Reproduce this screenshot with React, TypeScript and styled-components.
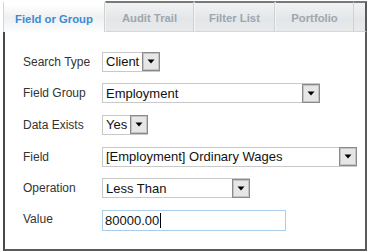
import styled, { createGlobalStyle } from 'styled-components';

const GlobalStyle = createGlobalStyle`
  body {
    margin: 0;
    background: #fff;
    font-family: "Liberation Sans", Arial, sans-serif;
  }
`;

const Window = styled.div`
  width: 364px;
  margin: 1px 0 0 3px;
`;

const TabBar = styled.div`
  display: flex;
  height: 31px;
`;

const Tab = styled.div<{ active?: boolean; w: number }>`
  width: ${(p) => p.w}px;
  box-sizing: border-box;
  display: flex;
  align-items: center;
  justify-content: center;
  font-size: 11.3px;
  font-weight: bold;
  color: ${(p) => (p.active ? '#3b8bd2' : '#9ea6ae')};
  padding-top: ${(p) => (p.active ? '3px' : '1px')};
  background: ${(p) =>
    p.active
      ? 'linear-gradient(#ffffff 0px, #ffffff 2px, #eef0f2 14px, #ffffff 31px)'
      : 'linear-gradient(#f0f2f3, #e3e6e8 60%, #e8eaec)'};
  border-top: ${(p) => (p.active ? '2px solid #fff' : '2px solid #7a7a7a')};
  border-left: 1px solid ${(p) => (p.active ? '#d6d6d6' : '#f4f4f4')};
  border-right: 1px solid ${(p) => (p.active ? '#d0d0d0' : '#cfd2d4')};
  border-bottom: ${(p) => (p.active ? 'none' : '1px solid #d4d6d8')};
`;

const TabFill = styled.div`
  flex: 1;
  background: linear-gradient(#f0f2f3, #e3e6e8 60%, #e8eaec);
  border-top: 2px solid #7a7a7a;
  border-right: 2px solid #5a5a5a;
  border-bottom: 1px solid #d4d6d8;
`;

const Body = styled.div`
  height: 219px;
  box-sizing: border-box;
  border-left: 2px solid #4a4a4a;
  border-right: 2px solid #5a5a5a;
  border-bottom: 2px solid #5a5a5a;
  padding: 14px 0 0 18px;
  display: grid;
  grid-template-columns: 79px auto;
  grid-auto-rows: 31.6px;
  align-items: center;
  align-content: start;
`;

const Label = styled.div<{ lift?: number }>`
  font-size: 12px;
  color: #333;
  margin-top: ${(p) => -(p.lift || 0)}px;
`;

const Select = styled.div<{ w: number }>`
  width: ${(p) => p.w}px;
  height: 20px;
  box-sizing: border-box;
  border: 1px solid #c9c9c9;
  display: flex;
  align-items: center;
  justify-content: space-between;
  font-size: 13px;
  color: #111;
  padding-left: 3px;
  background: #fff;
`;

const DropButton = styled.div`
  width: 18px;
  height: 19px;
  margin-right: -1px;
  box-sizing: border-box;
  border: 1px solid #8a8a8a;
  box-shadow: inset 0 0 0 1px #c4c4c4;
  background: #e6e6e6;
  display: flex;
  align-items: center;
  justify-content: center;
`;

const Input = styled.div<{ w: number }>`
  width: ${(p) => p.w}px;
  height: 21px;
  box-sizing: border-box;
  border: 1px solid #a9cdea;
  display: flex;
  align-items: center;
  font-size: 13px;
  color: #111;
  padding-left: 2px;
  margin-top: 2px;
`;

const Caret = styled.span`
  width: 1px;
  height: 15px;
  background: #000;
  margin-left: 1px;
`;

function Arrow() {
  return (
    <svg width="8" height="5" viewBox="0 0 8 5">
      <path d="M0.5 0.5H7.5L4 4.5Z" fill="#000" />
    </svg>
  );
}

function Dropdown({ value, w }: { value: string; w: number }) {
  return (
    <Select w={w}>
      <span>{value}</span>
      <DropButton>
        <Arrow />
      </DropButton>
    </Select>
  );
}

export default function App() {
  return (
    <>
      <GlobalStyle />
      <Window>
        <TabBar>
          <Tab active w={102}>Field or Group</Tab>
          <Tab w={89}>Audit Trail</Tab>
          <Tab w={81}>Filter List</Tab>
          <Tab w={79}>Portfolio</Tab>
          <TabFill />
        </TabBar>
        <Body>
          <Label>Search Type</Label>
          <Dropdown value="Client" w={58} />
          <Label>Field Group</Label>
          <Dropdown value="Employment" w={218} />
          <Label>Data Exists</Label>
          <Dropdown value="Yes" w={46} />
          <Label>Field</Label>
          <Dropdown value="[Employment] Ordinary Wages" w={255} />
          <Label>Operation</Label>
          <Dropdown value="Less Than" w={148} />
          <Label lift={2}>Value</Label>
          <Input w={184}>
            80000.00
            <Caret />
          </Input>
        </Body>
      </Window>
    </>
  );
}
